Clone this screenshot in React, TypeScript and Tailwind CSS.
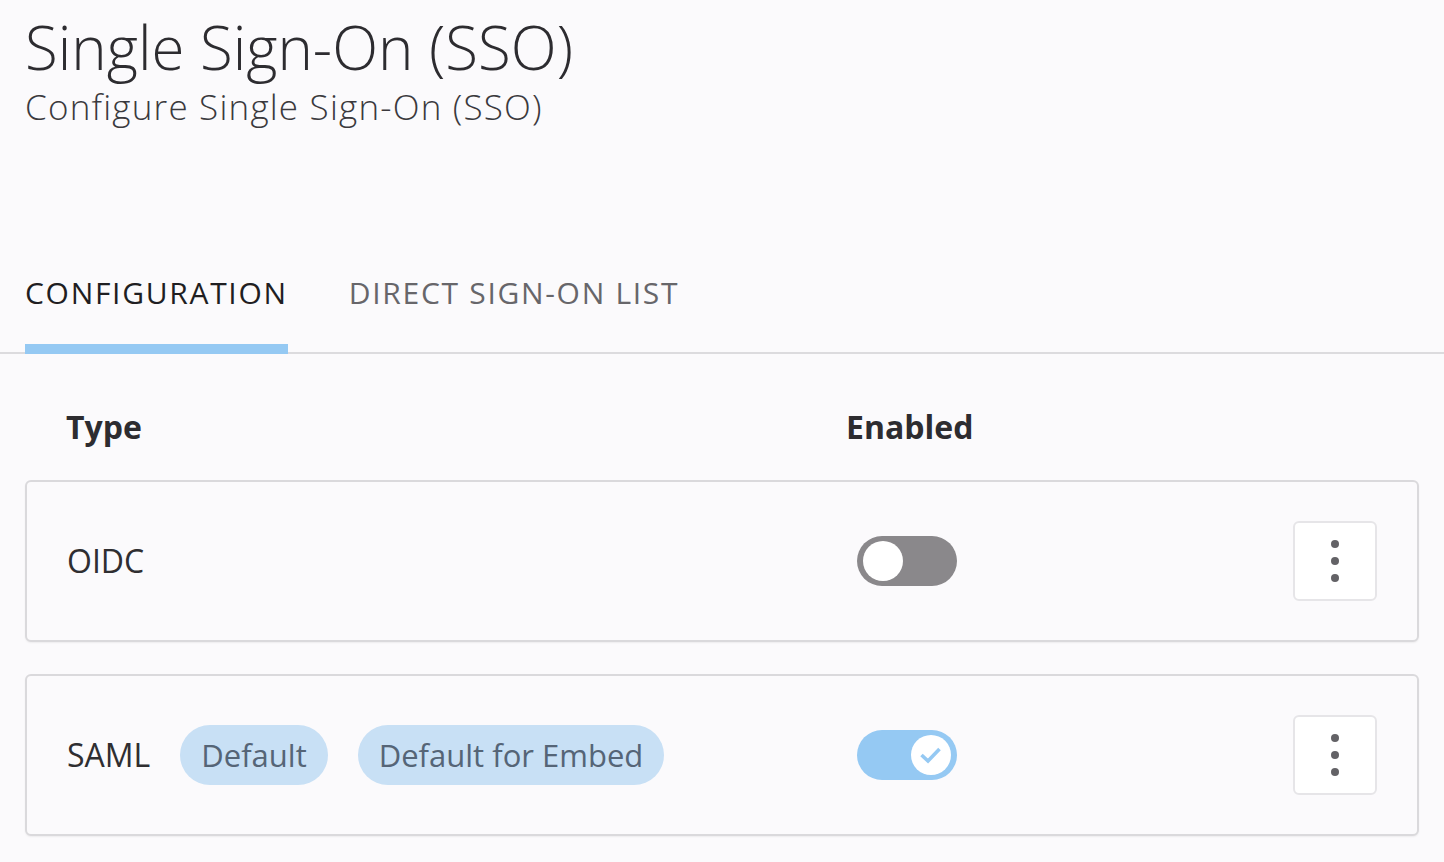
import React from "react";

const font = { fontFamily: '"Open Sans", "Noto Sans", sans-serif' };

function Toggle({ on }: { on: boolean }) {
  return (
    <div
      className={[
        "w-[100px] h-[50px] rounded-full flex items-center px-[6px]",
        on ? "bg-[#95c9f3] justify-end" : "bg-[#8a888b] justify-start",
      ].join(" ")}
    >
      <div className="w-[40px] h-[40px] rounded-full bg-white flex items-center justify-center">
        {on && (
          <svg width="28" height="28" viewBox="0 0 28 28">
            <path d="M4.5 14 L11 20 L22.5 8" fill="none" stroke="#95c9f3" strokeWidth="3.6" />
          </svg>
        )}
      </div>
    </div>
  );
}

function MenuButton() {
  return (
    <button className="w-[84px] h-[80px] rounded-[6px] border-2 border-[#e6e5e8] bg-white flex flex-col items-center justify-center gap-[9px]">
      <span className="w-[8px] h-[8px] rounded-full bg-[#636266]" />
      <span className="w-[8px] h-[8px] rounded-full bg-[#636266]" />
      <span className="w-[8px] h-[8px] rounded-full bg-[#636266]" />
    </button>
  );
}

function Badge({ children }: { children: React.ReactNode }) {
  return (
    <span className="h-[60px] px-[21px] rounded-full bg-[#c8e0f5] text-[#556577] text-[31px] flex items-center">
      {children}
    </span>
  );
}

type Row = { name: string; enabled: boolean; badges: string[] };

const ROWS: Row[] = [
  { name: "OIDC", enabled: false, badges: [] },
  { name: "SAML", enabled: true, badges: ["Default", "Default for Embed"] },
];

export default function App() {
  return (
    <div className="min-h-[862px] bg-[#fbfafc] text-[#2f2e31] overflow-hidden" style={font}>
      {/* Header */}
      <div className="px-[25px] pt-[9px]">
        <h1 className="text-[60px] font-light leading-[76px] text-[#2d2c30]">Single Sign-On (SSO)</h1>
        <p className="mt-[4px] text-[35px] font-light leading-[36px] text-[#3a393d] tracking-[1.2px]">
          Configure Single Sign-On (SSO)
        </p>
      </div>

      {/* Tabs */}
      <div className="mt-[150px] border-b-2 border-[#dcdbde] px-[25px] flex gap-[61px]">
        <div className="flex flex-col">
          <span className="text-[30px] font-medium tracking-[1.7px] text-[#1f1e22] leading-[36px] pb-[33px]">
            CONFIGURATION
          </span>
          <div className="h-[10px] bg-[#95c9f3] -mb-[2px]" />
        </div>
        <span className="text-[30px] font-medium tracking-[1.7px] text-[#67666a] leading-[36px]">
          DIRECT SIGN-ON LIST
        </span>
      </div>

      {/* Table */}
      <div className="px-[25px]">
        <div className="flex items-start pt-[53px] pb-[33px] text-[32px] leading-[40px] font-bold text-[#2d2c30]">
          <span className="pl-[41px] w-[821px]">Type</span>
          <span>Enabled</span>
        </div>

        <div className="flex flex-col gap-[32px]">
          {ROWS.map((r) => (
            <div
              key={r.name}
              className="h-[162px] rounded-[6px] border-2 border-[#dad9dc] bg-[#fbfafc] shadow-[0_1px_2px_rgba(0,0,0,0.06)] flex items-center pl-[40px] pr-[40px]"
            >
              <div className="w-[790px] flex items-center gap-[30px]">
                <span className="text-[32px] text-[#2f2e31]">{r.name}</span>
                {r.badges.map((b) => (
                  <Badge key={b}>{b}</Badge>
                ))}
              </div>
              <Toggle on={r.enabled} />
              <div className="flex-1" />
              <MenuButton />
            </div>
          ))}
        </div>
      </div>
    </div>
  );
}
